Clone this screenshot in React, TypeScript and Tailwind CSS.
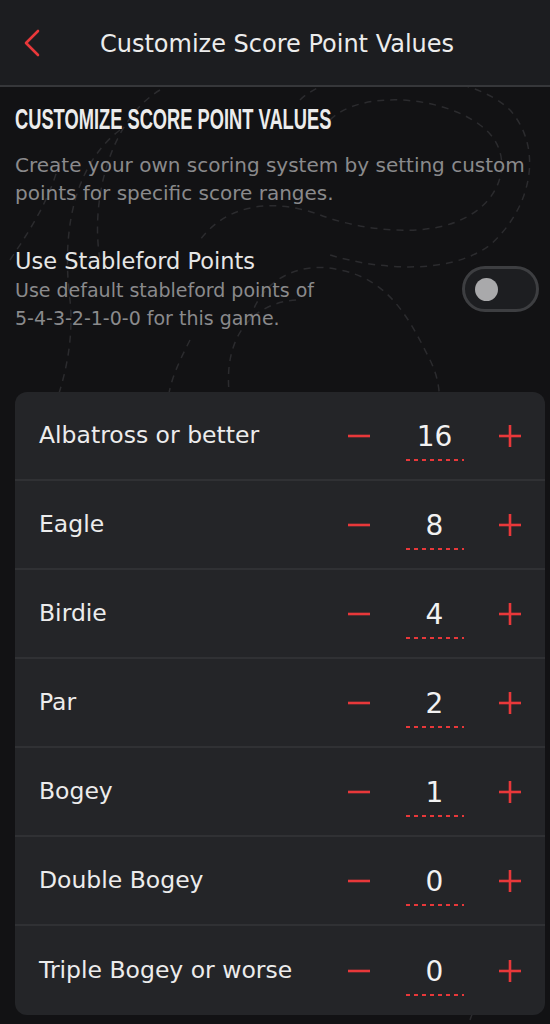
import { useState } from 'react';

const rowsInit = [
  { label: 'Albatross or better', value: 16 },
  { label: 'Eagle', value: 8 },
  { label: 'Birdie', value: 4 },
  { label: 'Par', value: 2 },
  { label: 'Bogey', value: 1 },
  { label: 'Double Bogey', value: 0 },
  { label: 'Triple Bogey or worse', value: 0 },
];

const Topo = () => (
  <svg
    className="absolute inset-0 w-full h-full pointer-events-none"
    viewBox="0 0 550 1024"
    fill="none"
    stroke="#2b2b2e"
    strokeWidth="1.5"
    strokeDasharray="7 6"
  >
    <path d="M330 120 C360 90 440 95 480 125 C515 150 505 195 470 215 C430 240 360 230 320 215 C280 200 230 200 200 240" />
    <path d="M300 100 C340 60 470 70 510 110 C545 150 530 210 490 245 C450 275 380 270 330 255" />
    <path d="M250 320 C260 280 300 260 340 270 C390 280 410 320 430 360 C445 390 440 420 430 440" />
    <path d="M230 400 C220 330 260 300 300 300" />
    <path d="M120 130 C80 160 60 220 70 300 C75 350 60 400 40 440" />
    <path d="M160 90 C110 120 90 200 100 260" />
    <path d="M10 260 C30 230 50 200 60 160" />
    <path d="M190 340 C180 360 170 380 168 400" />
    <path d="M470 1020 C480 990 500 980 520 970" />
  </svg>
);

const Row = ({
  label,
  value,
  onChange,
  last,
}: {
  label: string;
  value: number;
  onChange: (v: number) => void;
  last: boolean;
}) => (
  <div className={`flex items-center h-[89px] pl-6 pr-[24px] ${last ? '' : 'border-b-2 border-[#303134]'}`}>
    <span className="flex-1 text-[23.5px] text-[#ececec]">{label}</span>
    <button
      onClick={() => onChange(Math.max(0, value - 1))}
      className="w-[22px] h-[24px] flex items-center justify-center"
    >
      <svg width="22" height="22" viewBox="0 0 22 22" stroke="#e8383a" strokeWidth="2.6">
        <line x1="0" y1="11" x2="22" y2="11" />
      </svg>
    </button>
    <div className="w-[59px] mx-[35px] flex flex-col items-center pt-[10px]">
      <span className="text-[28px] leading-[32px] text-[#f2f2f2]">{value}</span>
      <svg width="59" height="2" className="mt-[6px]">
        <line x1="1" y1="1" x2="59" y2="1" stroke="#e8383a" strokeWidth="2" strokeDasharray="4 4" />
      </svg>
    </div>
    <button
      onClick={() => onChange(value + 1)}
      className="w-[22px] h-[24px] flex items-center justify-center"
    >
      <svg width="22" height="22" viewBox="0 0 22 22" stroke="#e8383a" strokeWidth="2.6">
        <line x1="0" y1="11" x2="22" y2="11" />
        <line x1="11" y1="0" x2="11" y2="22" />
      </svg>
    </button>
  </div>
);

export default function App() {
  const [rows, setRows] = useState(rowsInit);
  const [stableford, setStableford] = useState(false);

  return (
    <div className="relative min-h-screen bg-[#121214] font-['DejaVu_Sans',sans-serif] overflow-hidden">
      <Topo />
      <header className="relative h-[87px] bg-[#1c1d20] border-b-2 border-[#36373a] flex items-center px-6">
        <svg width="16" height="28" viewBox="0 0 16 28" fill="none" stroke="#e8383a" strokeWidth="2.6" strokeLinecap="round" strokeLinejoin="round">
          <path d="M14 2 L2 14 L14 26" />
        </svg>
        <h1 className="flex-1 text-center text-[24px] text-[#ececec] pr-[12px] pt-[2px]">Customize Score Point Values</h1>
      </header>

      <main className="relative pl-[15px] pr-[5px] pt-[12px]">
        <h2 className="inline-block origin-left scale-x-[0.62] font-['Liberation_Sans',sans-serif] font-bold text-[29.5px] leading-[40px] text-[#ececec] whitespace-nowrap">
          CUSTOMIZE SCORE POINT VALUES
        </h2>
        <p className="mt-[12px] pr-[10px] text-[20px] leading-[28px] text-[#8a8a8c]">
          Create your own scoring system by setting custom points for specific score ranges.
        </p>

        <div className="mt-[39px] flex items-center justify-between">
          <div>
            <p className="text-[22.5px] leading-[30px] text-[#e6e6e6]">Use Stableford Points</p>
            <p className="text-[19px] leading-[28px] text-[#8a8a8c] w-[320px]">
              Use default stableford points of 5-4-3-2-1-0-0 for this game.
            </p>
          </div>
          <button
            onClick={() => setStableford(!stableford)}
            className="mr-[6px] w-[77px] h-[46px] rounded-full border-[3px] border-[#3d3e41] bg-[#1d1e21] flex items-center px-[10px]"
          >
            <span className={`w-[23px] h-[23px] rounded-full ${stableford ? 'bg-[#e8383a] ml-auto' : 'bg-[#a9a9ab]'}`} />
          </button>
        </div>

        <div className="mt-[60px] bg-[#242528] rounded-[12px]">
          {rows.map((r, i) => (
            <Row
              key={r.label}
              label={r.label}
              value={r.value}
              last={i === rows.length - 1}
              onChange={(v) => setRows(rows.map((x, j) => (j === i ? { ...x, value: v } : x)))}
            />
          ))}
        </div>
      </main>
    </div>
  );
}
